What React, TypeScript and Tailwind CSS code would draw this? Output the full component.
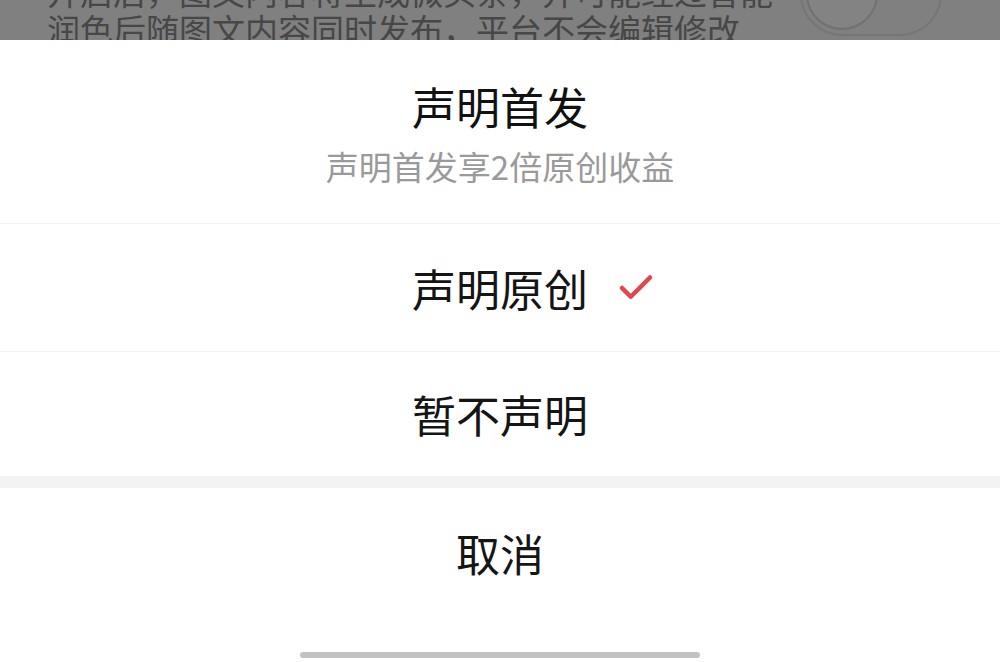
import { Check } from "lucide-react";

const font = { fontFamily: '"Noto Sans CJK SC", "Noto Sans", sans-serif' };

function Backdrop() {
  return (
    <div className="relative h-[40px] overflow-hidden bg-[#808080]">
      <div className="absolute bottom-[-8px] left-[47px] text-[33px] leading-[38px] text-[#474747]">
        <p>开启后，图文内容将生成微头条，并可能经过智能</p>
        <p>润色后随图文内容同时发布，平台不会编辑修改</p>
      </div>
      <div className="absolute right-[58px] top-[-48px] h-[84px] w-[142px] rounded-full border-2 border-[#767676] bg-[#808080]">
        <div className="absolute left-[4px] top-[4px] h-[72px] w-[72px] rounded-full border-2 border-[#717171] bg-[#838383]" />
      </div>
    </div>
  );
}

function Option({ label, checked }: { label: string; checked?: boolean }) {
  return (
    <div className="flex h-full items-center justify-center">
      <span className="relative text-[44px] leading-none text-[#151515]">
        {label}
        {checked && (
          <Check
            size={42}
            strokeWidth={2.6}
            className="absolute left-[203px] top-1/2 -translate-y-1/2 text-[#e0474f]"
          />
        )}
      </span>
    </div>
  );
}

export default function App() {
  return (
    <div className="flex h-[662px] w-[1000px] flex-col overflow-hidden bg-white" style={font}>
      <Backdrop />
      <div className="flex h-[183px] flex-col items-center pt-[38px]">
        <h1 className="text-[44px] leading-[56px] text-[#111]">声明首发</h1>
        <p className="mt-[12px] text-[33px] leading-[40px] text-[#9a9a9a]">声明首发享2倍原创收益</p>
      </div>
      <div className="h-[128px] border-t border-[#f3f3f3]">
        <Option label="声明原创" checked />
      </div>
      <div className="h-[125px] border-t border-[#f3f3f3]">
        <Option label="暂不声明" />
      </div>
      <div className="h-[12px] bg-[#f3f3f4]" />
      <div className="h-[130px]">
        <Option label="取消" />
      </div>
      <div className="flex flex-1 items-start justify-center pt-[34px]">
        <div className="h-[6px] w-[400px] rounded-full bg-[#c2c2c2]" />
      </div>
    </div>
  );
}
